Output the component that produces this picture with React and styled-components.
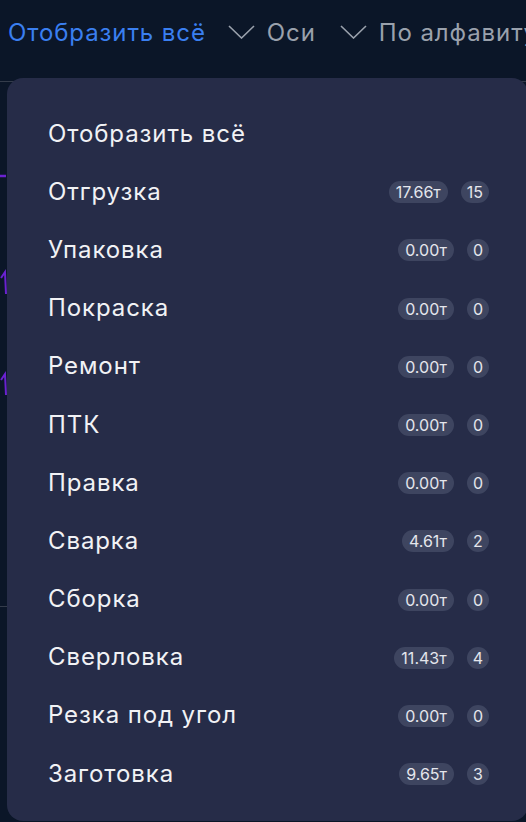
import React from "react";
import styled, { createGlobalStyle } from "styled-components";

const Global = createGlobalStyle`
  html, body { margin: 0; padding: 0; background: #0b1628; }
  body { font-family: Inter, "Noto Sans", sans-serif; -webkit-font-smoothing: antialiased; }
  #root { width: 526px; height: 822px; overflow: hidden; }
`;

const Page = styled.div`
  position: relative;
  width: 526px;
  height: 822px;
  background: #0b1628;
  overflow: hidden;
`;

const Toolbar = styled.div`
  display: flex;
  align-items: center;
  height: 64px;
  padding-left: 8px;
  white-space: nowrap;
`;

const ToolLink = styled.span`
  font-size: 24px;
  letter-spacing: 0.9px;
  color: ${(p) => (p.$active ? "#3a7ff0" : "#9aa1ac")};
  margin-right: ${(p) => p.$mr || 0}px;
`;

const Chevron = styled.svg`
  width: 27px;
  height: 14px;
  margin-right: 12px;
  flex: none;
`;

const Chart = styled.div`
  height: 758px;
  border-top: 1px solid #343c4b;
  margin-top: 17px;
`;

const ChartSvg = styled.svg`
  display: block;
  width: 526px;
  height: 740px;
`;

const Menu = styled.div`
  position: absolute;
  left: 7px;
  top: 78px;
  width: 521px;
  height: 743px;
  box-sizing: border-box;
  background: #262c48;
  border-radius: 16px;
  padding: 26px 39px 19px 41px;
  display: flex;
  flex-direction: column;
`;

const Row = styled.div`
  display: flex;
  align-items: center;
  height: 58.2px;
  flex: none;
`;

const Label = styled.span`
  flex: 1;
  font-size: 24px;
  letter-spacing: 0.9px;
  color: #f1f2f5;
`;

const Pill = styled.span`
  display: inline-flex;
  align-items: center;
  justify-content: center;
  height: 22px;
  min-width: 22px;
  box-sizing: border-box;
  padding: 0 ${(p) => (p.$count ? 6 : 7)}px;
  border-radius: 11px;
  background: #3e4560;
  color: #e4e6ec;
  font-size: 16px;
  margin-top: 2px;
  margin-left: ${(p) => (p.$count ? 13 : 0)}px;
`;

const items = [
  ["Отобразить всё"],
  ["Отгрузка", "17.66т", "15"],
  ["Упаковка", "0.00т", "0"],
  ["Покраска", "0.00т", "0"],
  ["Ремонт", "0.00т", "0"],
  ["ПТК", "0.00т", "0"],
  ["Правка", "0.00т", "0"],
  ["Сварка", "4.61т", "2"],
  ["Сборка", "0.00т", "0"],
  ["Сверловка", "11.43т", "4"],
  ["Резка под угол", "0.00т", "0"],
  ["Заготовка", "9.65т", "3"],
];

const ChevronIcon = () => (
  <Chevron viewBox="0 0 27 14">
    <path d="M1 1 L13.5 13 L26 1" fill="none" stroke="#9aa1ac" strokeWidth="1.6" />
  </Chevron>
);

export default function App() {
  return (
    <Page>
      <Global />
      <Toolbar>
        <ToolLink $active $mr={22}>Отобразить всё</ToolLink>
        <ChevronIcon />
        <ToolLink $mr={24}>Оси</ToolLink>
        <ChevronIcon />
        <ToolLink>По алфавиту</ToolLink>
      </Toolbar>
      <Chart>
        <ChartSvg viewBox="0 0 526 740">
          <line x1="0" y1="94" x2="6" y2="94" stroke="#6a22d0" strokeWidth="2.5" />
          <path d="M1 196 L5 190 L6 212" fill="none" stroke="#6a22d0" strokeWidth="2" />
          <path d="M1 298 L5 292 L6 313" fill="none" stroke="#6a22d0" strokeWidth="2" />
          <line x1="0" y1="524.5" x2="8" y2="524.5" stroke="#343c4b" strokeWidth="1" />
        </ChartSvg>
      </Chart>
      <Menu>
        {items.map(([name, weight, count]) => (
          <Row key={name}>
            <Label>{name}</Label>
            {weight && <Pill>{weight}</Pill>}
            {count && <Pill $count>{count}</Pill>}
          </Row>
        ))}
      </Menu>
    </Page>
  );
}
